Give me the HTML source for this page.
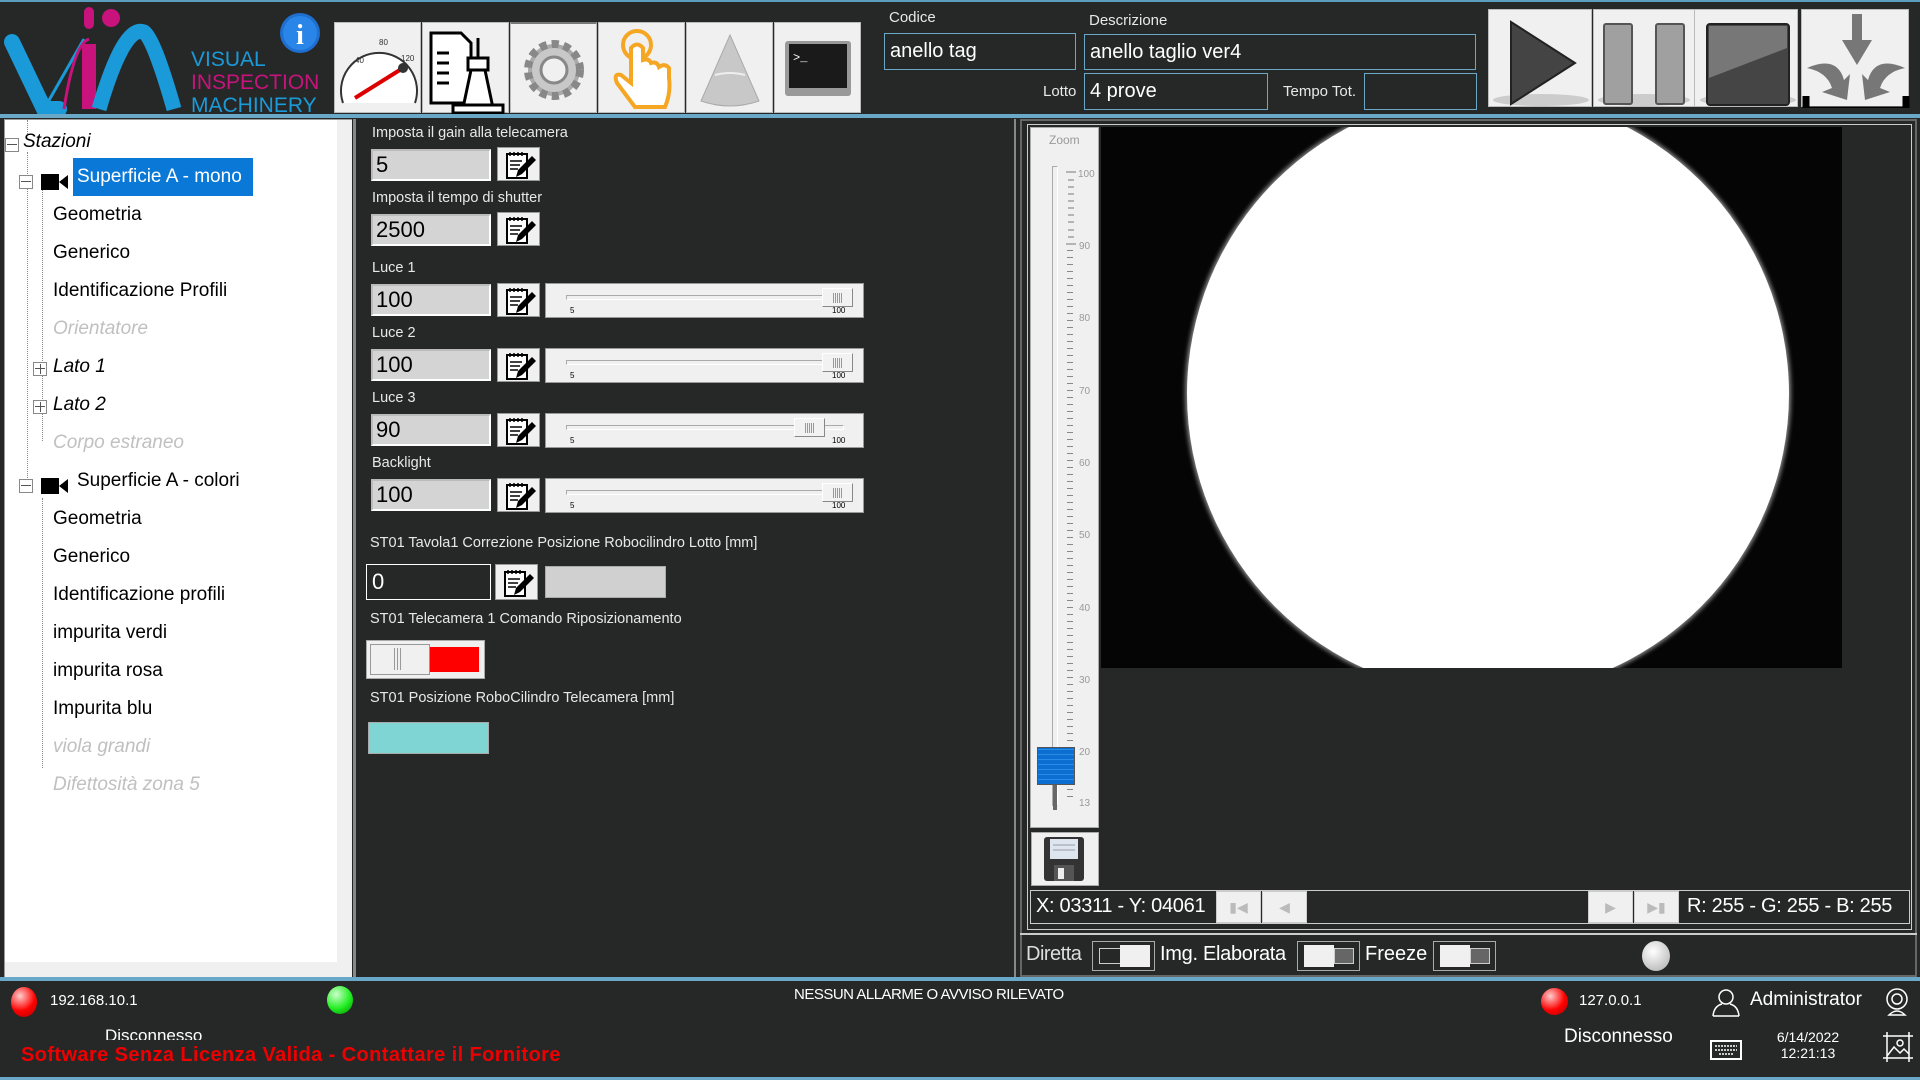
<!DOCTYPE html>
<html><head><meta charset="utf-8"><style>
*{margin:0;padding:0;box-sizing:border-box}
body{width:1920px;height:1080px;background:#262828;position:relative;overflow:hidden;font-family:"Liberation Sans",sans-serif;color:#fff}
.a{position:absolute}
.lbl{position:absolute;color:#e8e8e8;font-size:15px;white-space:nowrap}
.inp{position:absolute;border:1px solid #6aa8c8;background:#262828;color:#fff;font-size:20px;padding-left:5px;line-height:34px}
.tb{position:absolute;top:22px;width:87px;height:91px;background:#f0f0f0;border:1px solid #bbb}
.rb{position:absolute;top:9px;width:104px;height:98px;background:#f0f0f0;border:1px solid #bbb}
.tree{position:absolute;left:4px;top:119px;width:348px;height:858px;background:#fff;border:1px solid #999}
.ti{position:absolute;font-size:19px;color:#000;white-space:nowrap}
.dis{color:#c0c0c0;font-style:italic}
.box{position:absolute;width:11px;height:11px;border:1px solid #888;background:#fff}
.box:before{content:"";position:absolute;left:1px;top:5px;width:10px;height:1px;background:#555}
.box.p:after{content:"";position:absolute;left:6px;top:1px;width:1px;height:10px;background:#555}
.cam{position:absolute;width:28px;height:18px}
.gin{position:absolute;left:371px;width:120px;height:32px;background:#d4d4d4;border:2px solid #bbb;border-right-color:#fff;border-bottom-color:#fff;color:#000;font-size:22px;padding-left:3px;line-height:27px}
.eb{position:absolute;left:497px;width:43px;height:34px;background:#f0f0f0;border:1px solid #999}
.sl{position:absolute;left:545px;width:319px;height:35px;background:#f0f0f0;border:1px solid #999}
.sl .tr{position:absolute;left:20px;top:11px;width:278px;height:5px;border:1px solid #aaa;border-right-color:#fff;border-bottom-color:#fff}
.sl .th{position:absolute;top:4px;width:31px;height:19px;background:#f2f2f2;border:1px solid #888;border-left-color:#fff;border-top-color:#fff}
.sl .th:after{content:"";position:absolute;left:10px;top:4px;width:9px;height:10px;background:repeating-linear-gradient(90deg,#999 0 1px,transparent 1px 2px)}
.sl .t1,.sl .t2{position:absolute;top:22px;font-size:8px;color:#000}
.mlbl{position:absolute;left:372px;color:#e8e8e8;font-size:14.5px;white-space:nowrap}
.tog{position:absolute;height:30px;border:1px solid #aaa;background:#262828}
.nb{position:absolute;top:891px;width:45px;height:32px;background:#f0f0f0;border:1px solid #ccc;color:#bbb;font-size:14px;text-align:center;line-height:30px}
</style></head><body>
<div class="a" style="left:0;top:0;width:1920px;height:2px;background:#5a9ec0"></div>
<div class="a" style="left:0;top:114px;width:1920px;height:4px;background:#6aa8c8"></div>
<svg class="a" style="left:4px;top:4px" width="330" height="110" viewBox="0 0 330 110">
<path d="M8 38 L40 105 L55 105" stroke="#1a9ad8" stroke-width="16" fill="none" stroke-linecap="round"/>
<path d="M40 105 L80 35" stroke="#1a9ad8" stroke-width="3" fill="none"/>
<path d="M85 20 L85 8" stroke="#c8137c" stroke-width="10" stroke-linecap="round"/>
<circle cx="107" cy="14" r="9" fill="#c8137c"/>
<path d="M85 40 L85 105" stroke="#c8137c" stroke-width="14" fill="none"/>
<path d="M60 105 Q70 40 85 35" stroke="#c8137c" stroke-width="3" fill="none"/>
<path d="M95 105 Q120 20 140 28 Q150 35 170 105" stroke="#1a9ad8" stroke-width="15" fill="none"/>
<text x="187" y="62" font-family="Liberation Sans" font-size="21" fill="#1a9ad8">VISUAL</text>
<text x="187" y="85" font-family="Liberation Sans" font-size="21" fill="#c8137c">INSPECTION</text>
<text x="187" y="108" font-family="Liberation Sans" font-size="21" fill="#1a9ad8">MACHINERY</text>
<circle cx="296" cy="29" r="20" fill="#1f6fd0"/><circle cx="296" cy="29" r="17" fill="#2a85e8"/>
<text x="296" y="40" font-family="Liberation Serif" font-weight="bold" font-size="28" fill="#fff" text-anchor="middle">i</text>
</svg>
<div class="tb" style="left:334px"><svg width="87" height="91"><path d="M8 80 A38 38 0 1 1 80 80" fill="#fff" stroke="#333" stroke-width="2"/><path d="M20 75 L68 45" stroke="#d00" stroke-width="4"/><circle cx="68" cy="45" r="5" fill="#333"/><text x="20" y="40" font-size="8" fill="#333">40</text><text x="44" y="22" font-size="8" fill="#333">80</text><text x="66" y="38" font-size="8" fill="#333">120</text></svg></div>
<div class="tb" style="left:422px"><svg width="87" height="91"><path d="M8 10 H38 L48 20 V80 H8 Z" fill="#fff" stroke="#000" stroke-width="3"/><path d="M14 30h12M14 40h12M14 50h12M14 60h12" stroke="#000" stroke-width="3"/><path d="M55 15 V35 M45 35 h20 v12 h-20z M48 47 L40 85 h30 L62 47" stroke="#000" stroke-width="3" fill="#fff"/><rect x="30" y="82" width="50" height="8" fill="#fff" stroke="#000" stroke-width="3"/></svg></div>
<div class="tb" style="left:510px;border-top:2px solid #777"><svg width="87" height="91"><g transform="translate(43 46)"><circle r="26" fill="#aaa" stroke="#888" stroke-width="8" stroke-dasharray="7 5"/><circle r="22" fill="#c8c8c8"/><circle r="13" fill="#f0f0f0" stroke="#888" stroke-width="3"/></g></svg></div>
<div class="tb" style="left:598px"><svg width="87" height="91"><circle cx="38" cy="22" r="14" fill="none" stroke="#f5a623" stroke-width="4"/><path d="M32 25 V60 L22 52 Q14 50 18 60 L36 84 H66 Q72 70 70 55 V45 Q66 40 60 44 Q58 38 52 40 Q50 35 44 37 V25 Q38 18 32 25Z" fill="#fff" stroke="#f5a623" stroke-width="4"/></svg></div>
<div class="tb" style="left:686px"><svg width="87" height="91"><path d="M43 12 L72 78 Q43 88 14 78 Z" fill="#c8c8c8" stroke="#aaa"/><path d="M28 52 Q43 48 58 52" stroke="#eee" stroke-width="2" fill="none"/></svg></div>
<div class="tb" style="left:774px"><svg width="87" height="91"><rect x="10" y="18" width="66" height="55" rx="3" fill="#999"/><rect x="14" y="21" width="58" height="44" fill="#1a1a1a"/><text x="18" y="38" font-size="12" fill="#fff" font-family="Liberation Mono">&gt;_</text></svg></div>
<div class="lbl" style="left:889px;top:9px">Codice</div>
<div class="inp" style="left:884px;top:33px;width:192px;height:37px">anello tag</div>
<div class="lbl" style="left:1089px;top:12px">Descrizione</div>
<div class="inp" style="left:1084px;top:34px;width:392px;height:36px">anello taglio ver4</div>
<div class="lbl" style="left:1043px;top:83px">Lotto</div>
<div class="inp" style="left:1084px;top:73px;width:184px;height:37px">4 prove</div>
<div class="lbl" style="left:1283px;top:83px">Tempo Tot.</div>
<div class="inp" style="left:1364px;top:73px;width:113px;height:37px"></div>
<div class="rb" style="left:1488px"><svg width="104" height="98"><ellipse cx="52" cy="90" rx="48" ry="6" fill="#ccc"/><path d="M22 12 L86 53 L22 94Z" fill="#444" stroke="#222" stroke-width="2"/></svg></div>
<div class="rb" style="left:1593px"><svg width="100" height="98"><ellipse cx="50" cy="90" rx="46" ry="6" fill="#ccc"/><rect x="10" y="14" width="28" height="80" rx="2" fill="#a0a0a0" stroke="#555" stroke-width="2"/><rect x="62" y="14" width="28" height="80" rx="2" fill="#a0a0a0" stroke="#555" stroke-width="2"/></svg></div>
<div class="rb" style="left:1694px"><svg width="106" height="98"><ellipse cx="53" cy="90" rx="48" ry="6" fill="#ccc"/><rect x="12" y="14" width="82" height="81" rx="3" fill="#454545" stroke="#222" stroke-width="2"/><path d="M14 16 H92 V38 L14 68Z" fill="#777"/></svg></div>
<div class="rb" style="left:1801px;width:108px"><svg width="108" height="98"><path d="M50 4 h10 v26 h10 L55 55 L40 30 h10z" fill="#777"/><path d="M5 58 Q35 45 42 70 L48 64 L45 90 L20 82 L30 78 Q25 62 5 58Z" fill="#777"/><path d="M103 58 Q73 45 66 70 L60 64 L63 90 L88 82 L78 78 Q83 62 103 58Z" fill="#777"/><path d="M4 86 V100 H104 V86" stroke="#000" stroke-width="7" fill="none"/></svg></div>

<div class="tree">
<div class="a" style="left:22px;top:0;height:14px;border-left:1px dotted #888"></div>
<div class="a" style="left:22px;top:32px;height:338px;border-left:1px dotted #888"></div>
<div class="a" style="left:37px;top:66px;height:255px;border-left:1px dotted #888"></div>
<div class="a" style="left:37px;top:378px;height:270px;border-left:1px dotted #888"></div>
<div class="box" style="left:0;top:18px;width:14px;height:14px"></div>
<div class="ti" style="left:18px;top:11px;font-style:italic">Stazioni</div>
<div class="box" style="left:14px;top:55px;width:14px;height:14px"></div>
<svg class="cam" style="left:36px;top:53px" width="28" height="18"><rect x="0" y="1" width="18" height="16" fill="#000"/><path d="M18 9 L27 2 V16Z" fill="#000"/></svg>
<div class="a" style="left:68px;top:38px;width:180px;height:38px;background:#0a78d7"></div>
<div class="ti" style="left:72px;top:46px;color:#fff">Superficie A - mono</div>
<div class="ti" style="left:48px;top:84px">Geometria</div>
<div class="ti" style="left:48px;top:122px">Generico</div>
<div class="ti" style="left:48px;top:160px">Identificazione Profili</div>
<div class="ti dis" style="left:48px;top:198px">Orientatore</div>
<div class="box p" style="left:28px;top:242px;width:14px;height:14px"></div>
<div class="ti" style="left:48px;top:236px;font-style:italic">Lato 1</div>
<div class="box p" style="left:28px;top:280px;width:14px;height:14px"></div>
<div class="ti" style="left:48px;top:274px;font-style:italic">Lato 2</div>
<div class="ti dis" style="left:48px;top:312px">Corpo estraneo</div>
<div class="box" style="left:14px;top:359px;width:14px;height:14px"></div>
<svg class="cam" style="left:36px;top:357px" width="28" height="18"><rect x="0" y="1" width="18" height="16" fill="#000"/><path d="M18 9 L27 2 V16Z" fill="#000"/></svg>
<div class="ti" style="left:72px;top:350px">Superficie A - colori</div>
<div class="ti" style="left:48px;top:388px">Geometria</div>
<div class="ti" style="left:48px;top:426px">Generico</div>
<div class="ti" style="left:48px;top:464px">Identificazione profili</div>
<div class="ti" style="left:48px;top:502px">impurita verdi</div>
<div class="ti" style="left:48px;top:540px">impurita rosa</div>
<div class="ti" style="left:48px;top:578px">Impurita blu</div>
<div class="ti dis" style="left:48px;top:616px">viola grandi</div>
<div class="ti dis" style="left:48px;top:654px">Difettosità zona 5</div>
<div class="a" style="left:332px;top:0;width:15px;height:842px;background:#f0f0f0"></div>
<div class="a" style="left:0;top:842px;width:347px;height:15px;background:#f0f0f0"></div>
</div>

<div class="a" style="left:353px;top:119px;width:3px;height:858px;background:#888"></div>
<div class="a" style="left:1014px;top:119px;width:2px;height:858px;background:#888"></div>
<div class="mlbl" style="top:125px">Imposta il gain alla telecamera</div>
<div class="gin" style="top:149px">5</div><div class="eb" style="top:147px"></div>
<div class="mlbl" style="top:190px">Imposta il tempo di shutter</div>
<div class="gin" style="top:214px">2500</div><div class="eb" style="top:212px"></div>
<div class="mlbl" style="top:260px">Luce 1</div>
<div class="gin" style="top:284px">100</div><div class="eb" style="top:283px"></div>
<div class="sl" style="top:283px"><div class="tr"></div><div class="th" style="left:276px"></div><span class="t1" style="left:24px">5</span><span class="t2" style="left:286px">100</span></div>
<div class="mlbl" style="top:325px">Luce 2</div>
<div class="gin" style="top:349px">100</div><div class="eb" style="top:348px"></div>
<div class="sl" style="top:348px"><div class="tr"></div><div class="th" style="left:276px"></div><span class="t1" style="left:24px">5</span><span class="t2" style="left:286px">100</span></div>
<div class="mlbl" style="top:390px">Luce 3</div>
<div class="gin" style="top:414px">90</div><div class="eb" style="top:413px"></div>
<div class="sl" style="top:413px"><div class="tr"></div><div class="th" style="left:248px"></div><span class="t1" style="left:24px">5</span><span class="t2" style="left:286px">100</span></div>
<div class="mlbl" style="top:455px">Backlight</div>
<div class="gin" style="top:479px">100</div><div class="eb" style="top:478px"></div>
<div class="sl" style="top:478px"><div class="tr"></div><div class="th" style="left:276px"></div><span class="t1" style="left:24px">5</span><span class="t2" style="left:286px">100</span></div>
<div class="mlbl" style="left:370px;top:535px">ST01 Tavola1 Correzione Posizione Robocilindro Lotto [mm]</div>
<div class="a" style="left:366px;top:564px;width:125px;height:36px;border:1px solid #fff;font-size:22px;padding-left:5px;line-height:34px">0</div>
<div class="eb" style="left:495px;top:564px;height:36px"></div>
<div class="a" style="left:545px;top:566px;width:121px;height:32px;background:#d0d0d0;border:1px solid #aaa"></div>
<div class="mlbl" style="left:370px;top:611px">ST01 Telecamera 1 Comando Riposizionamento</div>
<div class="a" style="left:366px;top:640px;width:119px;height:39px;background:#f0f0f0;border:1px solid #aaa"></div>
<div class="a" style="left:370px;top:644px;width:60px;height:31px;background:#f0f0f0;border:1px solid #999"></div>
<div class="a" style="left:394px;top:648px;width:9px;height:22px;background:repeating-linear-gradient(90deg,#999 0 1px,transparent 1px 3px)"></div>
<div class="a" style="left:430px;top:647px;width:49px;height:25px;background:#f00"></div>
<div class="mlbl" style="left:370px;top:690px">ST01 Posizione RoboCilindro Telecamera [mm]</div>
<div class="a" style="left:368px;top:722px;width:121px;height:32px;background:#7fd4d4;border:1px solid #aaa"></div>
<svg width="0" height="0" style="position:absolute"><defs><g id="ed"><path d="M6 6 H26 V30 H6Z" fill="#fff" stroke="#000" stroke-width="2"/><path d="M9 4v4M13 4v4M17 4v4M21 4v4" stroke="#000" stroke-width="1.5"/><path d="M9 13h12M9 17h10M9 21h8" stroke="#000" stroke-width="1.5"/><path d="M15 29 L17 22 L31 8 L35 12 L21 26Z" fill="#000"/></g></defs></svg>
<svg class="a" style="left:501px;top:148px" width="38" height="34"><use href="#ed"/></svg>
<svg class="a" style="left:501px;top:213px" width="38" height="34"><use href="#ed"/></svg>
<svg class="a" style="left:501px;top:284px" width="38" height="34"><use href="#ed"/></svg>
<svg class="a" style="left:501px;top:349px" width="38" height="34"><use href="#ed"/></svg>
<svg class="a" style="left:501px;top:414px" width="38" height="34"><use href="#ed"/></svg>
<svg class="a" style="left:501px;top:479px" width="38" height="34"><use href="#ed"/></svg>
<svg class="a" style="left:499px;top:566px" width="38" height="34"><use href="#ed"/></svg>

<div class="a" style="left:1020px;top:119px;width:897px;height:858px;border:2px solid #666"></div>
<div class="a" style="left:1027px;top:124px;width:885px;height:806px;border:1px solid #ccc"></div>
<div class="a" style="left:1030px;top:127px;width:69px;height:701px;background:#f0f0f0;border:1px solid #aaa"></div>
<div class="a" style="left:1049px;top:133px;color:#999;font-size:12px">Zoom</div>
<div class="a" style="left:1052px;top:166px;width:6px;height:640px;border:1px solid #aaa;border-right-color:#fff"></div>
<svg class="a" style="left:1066px;top:170px" width="32" height="640">
<g stroke="#777" stroke-width="1"><path d="M0 2h10M2 10h6M2 17h6M2 24h6M2 31h6M2 38h6M2 45h6M2 52h6M2 60h6M2 67h6M0 74h10"/></g>
<g fill="#999" font-size="10" font-family="Liberation Sans"><text x="12" y="7">100</text><text x="13" y="79">90</text><text x="13" y="151">80</text><text x="13" y="224">70</text><text x="13" y="296">60</text><text x="13" y="368">50</text><text x="13" y="441">40</text><text x="13" y="513">30</text><text x="13" y="585">20</text><text x="13" y="636">13</text></g>
<path d="M4 80 V630" stroke="#888" stroke-width="6" stroke-dasharray="1 6"/>
</svg>
<div class="a" style="left:1053px;top:780px;width:4px;height:30px;background:#666"></div>
<div class="a" style="left:1037px;top:747px;width:38px;height:38px;background:#0a6fd0;border:1px solid #555;background-image:repeating-linear-gradient(0deg,transparent 0 4px,#2a8ae8 4px 5px)"></div>
<div class="a" style="left:1031px;top:832px;width:68px;height:54px;background:#f0f0f0;border:1px solid #aaa"></div>
<svg class="a" style="left:1044px;top:837px" width="42" height="46"><rect x="0" y="0" width="40" height="44" rx="3" fill="#333"/><rect x="6" y="2" width="28" height="20" fill="#dde6ee"/><path d="M9 8h22M9 13h22" stroke="#99a"/><rect x="10" y="28" width="20" height="16" fill="#555"/><rect x="14" y="31" width="6" height="11" fill="#eee"/></svg>
<div class="a" style="left:1101px;top:127px;width:741px;height:541px;background:#050505;overflow:hidden">
<div class="a" style="left:86px;top:-34px;width:602px;height:602px;border-radius:50%;background:#fff;box-shadow:0 0 4px 2px #888"></div>
</div>
<div class="a" style="left:1030px;top:890px;width:880px;height:34px;background:#262828;border:1px solid #ccc"></div>
<div class="a" style="left:1036px;top:895px;font-size:20px;color:#fff;letter-spacing:-0.3px">X: 03311 - Y: 04061</div>
<div class="nb" style="left:1216px">▮◀</div>
<div class="nb" style="left:1262px">◀</div>
<div class="nb" style="left:1588px">▶</div>
<div class="nb" style="left:1634px">▶▮</div>
<div class="a" style="left:1687px;top:895px;font-size:20px;color:#fff;letter-spacing:-0.3px">R: 255 - G: 255 - B: 255</div>
<div class="a" style="left:1020px;top:933px;width:897px;height:2px;background:#ccc"></div>
<div class="a" style="left:1026px;top:943px;font-size:20px;color:#ddd;letter-spacing:-0.5px">Diretta</div>
<div class="tog" style="left:1092px;top:941px;width:63px"><div class="a" style="left:6px;top:6px;width:22px;height:16px;border:1px solid #ccc"></div><div class="a" style="left:27px;top:3px;width:30px;height:22px;background:#f0f0f0"></div></div>
<div class="a" style="left:1160px;top:943px;font-size:20px;color:#fff;letter-spacing:-0.3px">Img. Elaborata</div>
<div class="tog" style="left:1297px;top:941px;width:63px"><div class="a" style="left:6px;top:3px;width:30px;height:22px;background:#f0f0f0"></div><div class="a" style="left:36px;top:6px;width:20px;height:16px;background:#666;border:1px solid #ccc"></div></div>
<div class="a" style="left:1365px;top:943px;font-size:20px;color:#fff">Freeze</div>
<div class="tog" style="left:1433px;top:941px;width:63px"><div class="a" style="left:6px;top:3px;width:30px;height:22px;background:#f0f0f0"></div><div class="a" style="left:36px;top:6px;width:20px;height:16px;background:#666;border:1px solid #ccc"></div></div>
<div class="a" style="left:1642px;top:941px;width:28px;height:30px;border-radius:50%;background:radial-gradient(circle at 40% 35%,#fff,#aaa)"></div>

<div class="a" style="left:0;top:977px;width:1920px;height:4px;background:#6aa8c8"></div>
<div class="a" style="left:0;top:1077px;width:1920px;height:3px;background:#6aa8c8"></div>
<div class="a" style="left:11px;top:987px;width:26px;height:30px;border-radius:50%;background:radial-gradient(circle at 35% 30%,#fcc,#f00 55%,#a00)"></div>
<div class="a" style="left:50px;top:992px;font-size:15px;color:#fff">192.168.10.1</div>
<div class="a" style="left:327px;top:986px;width:26px;height:28px;border-radius:50%;background:radial-gradient(circle at 35% 30%,#cfc,#2e2 55%,#080)"></div>
<div class="a" style="left:105px;top:1026px;width:120px;height:14px;overflow:hidden;font-size:17px;color:#fff">Disconnesso</div>
<div class="a" style="left:21px;top:1044px;font-size:20px;font-weight:bold;color:#e00;letter-spacing:0.4px">Software Senza Licenza Valida - Contattare il Fornitore</div>
<div class="a" style="left:794px;top:986px;font-size:15px;color:#fff;letter-spacing:-0.5px">NESSUN ALLARME O AVVISO RILEVATO</div>
<div class="a" style="left:1541px;top:988px;width:27px;height:27px;border-radius:50%;background:radial-gradient(circle at 35% 30%,#fcc,#f00 55%,#a00)"></div>
<div class="a" style="left:1579px;top:992px;font-size:15px;color:#fff">127.0.0.1</div>
<div class="a" style="left:1564px;top:1026px;font-size:19px;color:#fff">Disconnesso</div>
<svg class="a" style="left:1712px;top:988px" width="28" height="30"><circle cx="14" cy="9" r="7" fill="none" stroke="#fff" stroke-width="1.5"/><path d="M1 28 Q2 18 10 16 M27 28 Q26 18 18 16 M1 28 H27" fill="none" stroke="#fff" stroke-width="1.5"/></svg>
<div class="a" style="left:1750px;top:989px;font-size:19px;color:#fff">Administrator</div>
<svg class="a" style="left:1884px;top:987px" width="26" height="30"><circle cx="13" cy="12" r="10" fill="none" stroke="#fff" stroke-width="1.5"/><circle cx="13" cy="12" r="5" fill="none" stroke="#fff" stroke-width="1.5"/><path d="M5 28 Q13 20 21 28Z" fill="none" stroke="#fff" stroke-width="1.5"/></svg>
<svg class="a" style="left:1710px;top:1040px" width="32" height="20"><rect x="1" y="1" width="30" height="18" fill="none" stroke="#fff" stroke-width="2"/><path d="M5 6h22M5 10h22M9 14h14" stroke="#fff" stroke-width="1.5" stroke-dasharray="2 1"/></svg>
<div class="a" style="left:1772px;top:1029px;font-size:14px;color:#fff;text-align:center;line-height:16px;width:72px">6/14/2022<br>12:21:13</div>
<svg class="a" style="left:1883px;top:1032px" width="30" height="30"><path d="M0 4H30M0 26H30M4 0V30M26 0V30" stroke="#fff" stroke-width="1.5"/><circle cx="17" cy="11" r="3" fill="none" stroke="#fff" stroke-width="1.5"/><path d="M4 24 L11 15 L17 21 L21 17 L26 22" fill="none" stroke="#fff" stroke-width="1.5"/></svg>
</body></html>
